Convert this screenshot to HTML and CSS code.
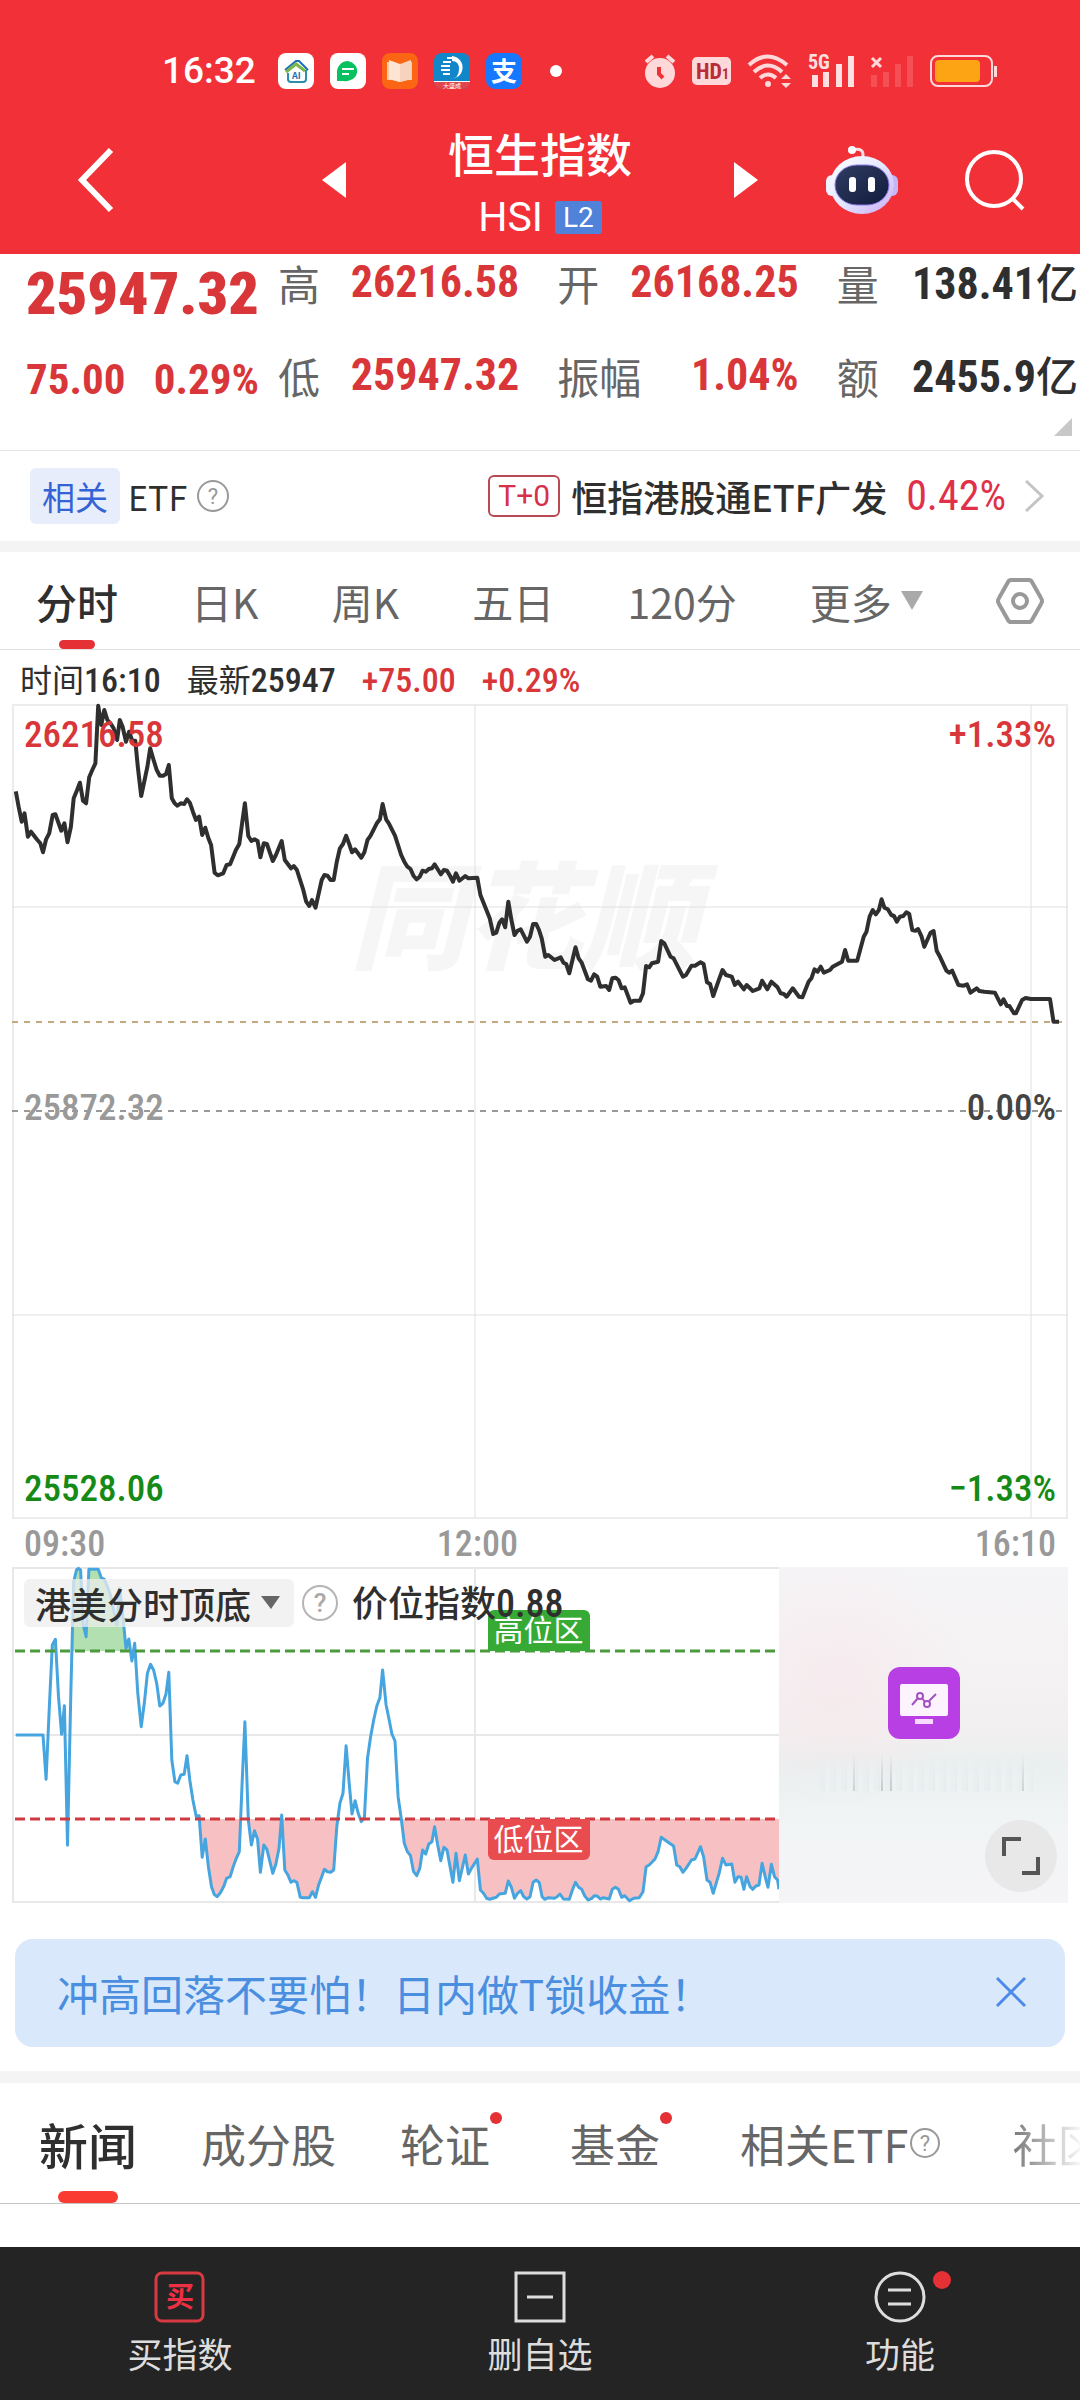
FILE: index.html
```html
<!DOCTYPE html>
<html lang="zh-CN">
<head>
    <meta charset="UTF-8">
    <meta name="viewport" content="width=device-width, initial-scale=1.0">
    <title>恒生指数 HSI</title>
    <link rel="stylesheet" href="styles.css">
</head>
<body>
    <header class="header">
        <div class="status-bar">
            <span class="clock">16:32</span>
            <div class="app-icons">
                <svg width="36" height="36" viewBox="0 0 36 36">
                    <rect width="36" height="36" rx="8" fill="#fff"/>
                    <path d="M7 17 18 8l3 0 9 9" fill="none" stroke="#1d6fb5" stroke-width="2"/>
                    <path d="M8 19 18 11l9 7" fill="none" stroke="#7ab648" stroke-width="3"/>
                    <path d="M10 20v6q0 3 3 3h12q3 0 3-3v-9" fill="none" stroke="#2a8fa8" stroke-width="2"/>
                    <text x="14" y="26" font-size="9" font-weight="700" fill="#1d6fb5">AI</text>
                </svg>
                <svg width="36" height="36" viewBox="0 0 36 36">
                    <rect width="36" height="36" rx="8" fill="#fff"/>
                    <path d="M18 8a11 10 0 1 1-4 20H7v-9A11 11 0 0 1 18 8z" fill="#0ac160"/>
                    <path d="M12 16h12M12 21h7" stroke="#fff" stroke-width="2"/>
                </svg>
                <svg width="36" height="36" viewBox="0 0 36 36">
                    <rect width="36" height="36" rx="8" fill="#fb6514"/>
                    <path d="M5 9h4l9 3 9-3h3v18h-4l-8 2-8-2H5z" fill="#fbc9a8"/>
                    <path d="M7 7l11 4v18L7 26z" fill="#fde4d3"/>
                    <path d="M29 7l-11 4v18l11-3z" fill="#f6d3bf"/>
                </svg>
                <svg width="36" height="36" viewBox="0 0 36 36">
                    <rect width="36" height="36" rx="8" fill="#1187c9"/>
                    <path d="M0 29h36a8 7 0 0 1-8 7H8a8 7 0 0 1-8-7z" fill="#e0444c"/>
                    <path d="M0 28h36v1H0z" fill="#fff"/>
                    <path d="M18 3a11 11 0 1 1-2 23q9 0 9-10 0-8-7-8z" fill="#fff"/>
                    <path d="M18 5H13M17 9h-8M16 13H7M16 17H7M16 21H9" stroke="#fff" stroke-width="2"/>
                    <text x="9" y="35" font-size="6" fill="#fff">大盛成</text>
                </svg>
                <svg width="36" height="36" viewBox="0 0 36 36">
                    <rect width="36" height="36" rx="9" fill="#1677ff"/>
                    <text x="5" y="28" font-size="26" font-weight="700" fill="#fff">支</text>
                </svg>
            </div>
            <span class="status-dot"></span>
            <div class="system-icons">
                <svg width="32" height="34" viewBox="0 0 32 34" fill="#ffd9da">
                    <circle cx="16" cy="19" r="15"/>
                    <path d="M2 8 9 2M30 8l-7-6" stroke="#ffd9da" stroke-width="4"/>
                    <path d="M15 13v7l4 4" stroke="#f13038" stroke-width="4" fill="none"/>
                </svg>
                <svg width="39" height="28" viewBox="0 0 39 28">
                    <rect width="39" height="28" rx="5" fill="#ffd9da"/>
                    <text x="4" y="22" font-size="22" font-weight="700" font-family="Roboto Condensed, Roboto" fill="#b92c38">HD</text>
                    <text x="30" y="22" font-size="14" font-weight="700" font-family="Roboto Condensed, Roboto" fill="#b92c38">1</text>
                </svg>
                <svg width="45" height="34" viewBox="0 0 45 34" fill="none" stroke="#ffd9da" stroke-width="4">
                    <path d="M2 11q18-17 38 0M7 18q14-13 28 0M13 24q8-7 16 0"/>
                    <circle cx="21" cy="30" r="3" fill="#ffd9da" stroke="none"/>
                    <path d="M34 25l5-5 5 5zM34 29h10l-5 5z" fill="#ffd9da" stroke="none"/>
                </svg>
                <svg width="47" height="34" viewBox="0 0 47 34" fill="#ffe0e0">
                    <rect x="4" y="21" width="6" height="12"/>
                    <rect x="15" y="18" width="6" height="15"/>
                    <rect x="28" y="10" width="6" height="23"/>
                    <rect x="40" y="2" width="6" height="31"/>
                    <text x="0" y="15" font-size="20" font-weight="700" font-family="Roboto Condensed, Roboto">5G</text>
                </svg>
                <svg width="43" height="34" viewBox="0 0 43 34" fill="#f8646a">
                    <rect x="0" y="21" width="6" height="12" opacity=".6"/>
                    <rect x="12" y="18" width="6" height="15" opacity=".6"/>
                    <rect x="24" y="10" width="6" height="23" opacity=".6"/>
                    <rect x="36" y="2" width="6" height="31" opacity=".6"/>
                    <path d="M1 4l9 9M10 4l-9 9" stroke="#ffd9da" stroke-width="3"/>
                </svg>
                <svg width="68" height="32" viewBox="0 0 68 32">
                    <rect x="1" y="1" width="61" height="30" rx="7" fill="none" stroke="#ffd9da" stroke-width="2"/>
                    <rect x="5" y="5" width="45" height="22" rx="4" fill="#fda414"/>
                    <rect x="64" y="11" width="3" height="11" fill="#ffd9da"/>
                </svg>
            </div>
        </div>
        <nav class="title-bar">
            <div class="title-left">
                <button class="icon-btn" aria-label="返回">
                    <svg width="36" height="64" viewBox="0 0 36 64" fill="none" stroke="#fff" stroke-width="6"><path d="M34 2 5 32l29 30"/></svg>
                </button>
                <button class="icon-btn" aria-label="上一个">
                    <svg width="24" height="36" viewBox="0 0 24 36"><path d="M24 0v36L0 18z" fill="#fff"/></svg>
                </button>
            </div>
            <div class="title">
                <h1>恒生指数</h1>
                <p><span>HSI</span><span class="level">L2</span></p>
            </div>
            <div class="title-right">
                <button class="icon-btn" aria-label="下一个">
                    <svg width="24" height="36" viewBox="0 0 24 36"><path d="M0 0v36l24-18z" fill="#fff"/></svg>
                </button>
                <button class="icon-btn" aria-label="智能助手">
                    <svg width="72" height="70" viewBox="0 0 72 70">
                        <defs>
                            <linearGradient id="shell" x1="0" y1="0" x2="1" y2="1">
                                <stop offset="0" stop-color="#fff"/>
                                <stop offset=".5" stop-color="#e3e8ff"/>
                                <stop offset="1" stop-color="#c9a9f5"/>
                            </linearGradient>
                            <linearGradient id="visor" x1="0" y1="0" x2="1" y2="1">
                                <stop offset="0" stop-color="#303c62"/>
                                <stop offset="1" stop-color="#111b3c"/>
                            </linearGradient>
                        </defs>
                        <path d="M27 5q11-3 10 7" fill="none" stroke="#fbdfe4" stroke-width="3"/>
                        <circle cx="26" cy="5" r="4" fill="#fff"/>
                        <rect x="0" y="30" width="12" height="21" rx="6" fill="#f0f1ff"/>
                        <rect x="60" y="30" width="12" height="21" rx="6" fill="#c3b8f5"/>
                        <ellipse cx="36" cy="40" rx="32" ry="29" fill="url(#shell)"/>
                        <rect x="9" y="20" width="54" height="40" rx="22" fill="url(#visor)" stroke="#8c7be8" stroke-width="1"/>
                        <rect x="23" y="32" width="7" height="15" rx="3" fill="#fff"/>
                        <rect x="42" y="32" width="7" height="15" rx="3" fill="#fff"/>
                    </svg>
                </button>
                <button class="icon-btn" aria-label="搜索">
                    <svg width="60" height="62" viewBox="0 0 60 62" fill="none" stroke="#fff" stroke-width="4"><circle cx="29" cy="30" r="27"/><path d="M47 49l11 11"/></svg>
                </button>
            </div>
        </nav>
    </header>

    <main>
        <section class="quote">
            <div class="quote-main">
                <strong class="last">25947.32</strong>
                <div class="change"><span>75.00</span><span>0.29%</span></div>
            </div>
            <dl class="quote-grid">
                <div><dt>高</dt><dd class="up">26216.58</dd></div>
                <div><dt>开</dt><dd class="up">26168.25</dd></div>
                <div><dt>量</dt><dd>138.41<span class="unit">亿</span></dd></div>
                <div><dt>低</dt><dd class="up">25947.32</dd></div>
                <div><dt>振幅</dt><dd class="up">1.04%</dd></div>
                <div><dt>额</dt><dd>2455.9<span class="unit">亿</span></dd></div>
            </dl>
            <span class="corner"></span>
        </section>

        <a class="etf-row" href="#etf">
            <span class="etf-tag">相关</span>
            <span class="etf-label">ETF</span>
            <svg width="32" height="32" viewBox="0 0 32 32"><circle cx="16" cy="16" r="15" fill="none" stroke="#999" stroke-width="2"/><text x="16" y="24" text-anchor="middle" font-size="22" font-family="Roboto" fill="#999">?</text></svg>
            <span class="t0">T+0</span>
            <span class="etf-name">恒指港股通ETF广发</span>
            <span class="etf-change">0.42%</span>
            <svg width="19" height="32" viewBox="0 0 19 32" fill="none" stroke="#c4c4c4" stroke-width="3"><path d="M1 1l16 15L1 31"/></svg>
        </a>

        <nav class="period-tabs">
            <button class="active">分时</button>
            <button>日K</button>
            <button>周K</button>
            <button>五日</button>
            <button>120分</button>
            <button>更多<svg width="22" height="19" viewBox="0 0 22 19"><path d="M0 0h22L11 19z" fill="#aaa"/></svg></button>
            <button aria-label="设置"><svg width="48" height="46" viewBox="0 0 48 46" fill="none" stroke="#999" stroke-width="4"><path d="M15 2h18q2 0 3 2l9 16q2 3 0 6l-9 16q-1 2-3 2H15q-2 0-3-2L3 26q-2-3 0-6l9-16q1-2 3-2z"/><circle cx="24" cy="23" r="7"/></svg></button>
        </nav>

        <p class="tick-info">
            <span>时间<b>16:10</b></span>
            <span>最新<b>25947</b></span>
            <span class="up"><b>+75.00</b></span>
            <span class="up"><b>+0.29%</b></span>
        </p>

        <section class="chart">
            <span class="watermark">同花顺</span>
            <svg class="plot" viewBox="0 0 1056 815">
                <g stroke="#e0e0e0" stroke-width="1" fill="none">
                    <rect x="1" y="1" width="1054" height="813" stroke="#ececec" stroke-width="2"/>
                    <path d="M463 1v813M1019 1v813M0 203h1056M0 611h1056"/>
                </g>
                <path d="M0 318h1050" stroke="#c3a97c" stroke-width="2" stroke-dasharray="6 6"/>
                <path d="M0 407h1050" stroke="#999" stroke-width="2" stroke-dasharray="6 6"/>
                <path id="priceLine" fill="none" stroke="#2f2f2f" stroke-width="4" stroke-linejoin="round"/>
            </svg>
            <span class="label top-left up">26216.58</span>
            <span class="label top-right up">+1.33%</span>
            <span class="label mid-left">25872.32</span>
            <span class="label mid-right">0.00%</span>
            <span class="label bottom-left down">25528.06</span>
            <span class="label bottom-right down">−1.33%</span>
        </section>
        <div class="time-axis"><span>09:30</span><span>12:00</span><span>16:10</span></div>

        <section class="indicator">
            <div class="indicator-plot">
                <svg class="plot" viewBox="0 0 767 336">
                    <defs>
                        <clipPath id="above"><rect x="0" y="0" width="767" height="84"/></clipPath>
                        <clipPath id="below"><rect x="0" y="252" width="767" height="84"/></clipPath>
                    </defs>
                    <path d="M0 1h767M1 1v334M0 335h767M0 168h767M463 1v334" stroke="#e8e8e8" stroke-width="2" fill="none"/>
                    <g clip-path="url(#above)"><path id="highArea" fill="#b3e0b0"/></g>
                    <g clip-path="url(#below)"><path id="lowArea" fill="#f7c1c3"/></g>
                    <path id="indexLine" fill="none" stroke="#46a5df" stroke-width="3" stroke-linejoin="round"/>
                    <path d="M3 84h764" stroke="#4b9a3c" stroke-width="3" stroke-dasharray="10 5"/>
                    <path d="M3 252h764" stroke="#cf3a41" stroke-width="3" stroke-dasharray="10 5"/>
                </svg>
                <span class="zone high">高位区</span>
                <span class="zone low">低位区</span>
                <div class="indicator-bar">
                    <label class="picker">
                        <select aria-label="指标"><option>港美分时顶底</option></select>
                        <svg width="19" height="13" viewBox="0 0 19 13"><path d="M0 0h19l-9 13z" fill="#666"/></svg>
                    </label>
                    <svg width="36" height="36" viewBox="0 0 36 36"><circle cx="18" cy="18" r="17" fill="none" stroke="#b5b5b5" stroke-width="2"/><text x="18" y="27" text-anchor="middle" font-size="26" font-family="Roboto" fill="#aaa">?</text></svg>
                    <span>价位指数<b>0.88</b></span>
                </div>
            </div>
            <div class="locked">
                <span class="barcode"></span>
                <svg width="72" height="72" viewBox="0 0 72 72">
                    <rect width="72" height="72" rx="12" fill="#b83fe4"/>
                    <rect x="12" y="17" width="48" height="32" rx="2" fill="#fcf3ff"/>
                    <rect x="27" y="52" width="18" height="5" fill="#f9d9ff"/>
                    <g fill="none" stroke="#a350c0" stroke-width="2"><path d="M24 38l6-7M34 31l3 4M41 34l7-7"/><circle cx="32" cy="29" r="3"/><circle cx="39" cy="37" r="3"/></g>
                </svg>
                <button class="expand" aria-label="展开">
                    <svg width="38" height="38" viewBox="0 0 38 38" fill="none" stroke="#555" stroke-width="4"><path d="M2 19V2h17M36 20v16H20"/></svg>
                </button>
            </div>
        </section>

        <div class="banner">
            <span>冲高回落不要怕！日内做T锁收益！</span>
            <button class="icon-btn" aria-label="关闭">
                <svg width="30" height="30" viewBox="0 0 30 30" stroke="#4a8bea" stroke-width="3"><path d="M1 1l28 28M29 1 1 29"/></svg>
            </button>
        </div>

        <nav class="news-tabs">
            <button class="active">新闻</button>
            <button>成分股</button>
            <button class="dot">轮证</button>
            <button class="dot">基金</button>
            <button>相关ETF<svg width="31" height="31" viewBox="0 0 31 31"><circle cx="15" cy="15" r="14" fill="none" stroke="#999" stroke-width="2"/><text x="15" y="23" text-anchor="middle" font-size="22" font-family="Roboto" fill="#999">?</text></svg></button>
            <button class="fade">社区</button>
        </nav>
    </main>

    <nav class="bottom-nav">
        <a href="#buy">
            <svg width="50" height="50" viewBox="0 0 50 50"><rect x="1" y="1" width="47" height="48" rx="6" fill="none" stroke="#d83a42" stroke-width="3"/><text x="25" y="35" text-anchor="middle" font-size="28" font-weight="700" fill="#ee3044">买</text></svg>
            <span>买指数</span>
        </a>
        <a href="#remove">
            <svg width="50" height="50" viewBox="0 0 50 50" fill="none" stroke="#ddd" stroke-width="3"><rect x="1" y="1" width="48" height="48"/><path d="M12 25h26"/></svg>
            <span>删自选</span>
        </a>
        <a href="#more">
            <svg width="52" height="50" viewBox="0 0 52 50" fill="none" stroke="#ddd" stroke-width="3"><circle cx="26" cy="25" r="24"/><path d="M14 18h23M14 32h23"/></svg>
            <span>功能</span>
            <i class="badge"></i>
        </a>
    </nav>
    <script src="chart.js"></script>
</body>
</html>
```

FILE: styles.css
```css
* {
    box-sizing: border-box;
}
body {
    margin: 0;
    background: #fff;
    color: #2f2f2f;
    font-family: "Noto Sans CJK SC", sans-serif;
    min-height: 100vh;
    display: flex;
    flex-direction: column;
}
main {
    flex: 1;
}
h1, p, dl, dd {
    margin: 0;
}
button {
    border: none;
    background: none;
    padding: 0;
    color: inherit;
    font: inherit;
    cursor: pointer;
}
a {
    color: inherit;
    text-decoration: none;
}
svg {
    display: block;
    flex-shrink: 0;
    overflow: visible;
}
.up {
    color: #d9363a;
}
.down {
    color: #168a16;
}

/* header */
.header {
    background: #f13038;
    color: #fff;
}
.status-bar {
    display: flex;
    align-items: center;
    height: 106px;
    padding: 36px 82px 0 162px;
}
.clock {
    font: 500 37px/70px Roboto, sans-serif;
}
.app-icons {
    display: flex;
    gap: 16px;
    margin-left: 22px;
}
.status-dot {
    width: 12px;
    height: 12px;
    margin-left: 28px;
    border-radius: 50%;
    background: #fff;
}
.system-icons {
    display: flex;
    align-items: center;
    gap: 16px;
    margin-left: auto;
}
.title-bar {
    display: grid;
    grid-template-columns: 1fr auto 1fr;
    align-items: center;
    height: 148px;
}
.title-left, .title-right {
    display: flex;
    align-items: center;
    justify-content: space-between;
}
.title-left {
    padding: 0 102px 0 77px;
}
.title-right {
    padding: 0 55px 0 102px;
}
.title {
    padding-top: 10px;
}
.title h1 {
    font-size: 46px;
    line-height: 64px;
    font-weight: 500;
}
.title p {
    display: flex;
    align-items: center;
    justify-content: center;
    gap: 12px;
    font: 41px/66px Roboto, sans-serif;
}
.level {
    padding: 0 8px;
    border-radius: 3px;
    background: #4f82d8;
    font-size: 28px;
    line-height: 33px;
}

/* quote */
.quote {
    position: relative;
    display: flex;
    gap: 19px;
    height: 197px;
    padding: 0 2px 0 26px;
    border-bottom: 1px solid #e4e4e4;
}
.quote-main {
    color: #d9363a;
    padding-top: 8px;
    font-family: "Roboto Condensed", Roboto, sans-serif;
    font-weight: 700;
}
.last {
    display: block;
    font-size: 60px;
    line-height: 64px;
}
.change {
    display: flex;
    justify-content: space-between;
    margin-top: 25px;
    font-size: 43px;
    line-height: 56px;
}
.quote-grid {
    flex: 1;
    display: grid;
    grid-template-columns: repeat(3, 1fr);
    column-gap: 38px;
    row-gap: 37px;
    align-content: start;
}
.quote-grid div {
    display: flex;
    justify-content: space-between;
    align-items: center;
    height: 56px;
    white-space: nowrap;
}
.quote-grid dt {
    color: #666;
    font-size: 42px;
}
.quote-grid dd {
    font: 700 44px/56px "Roboto Condensed", Roboto, sans-serif;
}
.unit {
    font: 500 42px/56px "Noto Sans CJK SC", sans-serif;
}
.corner {
    position: absolute;
    right: 8px;
    bottom: 14px;
    border-left: 18px solid transparent;
    border-bottom: 18px solid #c8c8c8;
}

/* related etf */
.etf-row {
    display: flex;
    align-items: center;
    height: 90px;
    padding: 0 36px 0 30px;
}
.etf-tag {
    padding: 0 12px;
    border-radius: 6px;
    background: #e8edfb;
    color: #3463d5;
    font-size: 33px;
    line-height: 56px;
}
.etf-label {
    margin: 0 10px 0 8px;
    font-size: 34px;
}
.t0 {
    margin-left: auto;
    padding: 0 8px;
    border: 2px solid #b94a54;
    border-radius: 6px;
    color: #d8304a;
    font: 30px/38px Roboto, sans-serif;
}
.etf-name {
    margin: 0 19px 0 11px;
    font-size: 36px;
    font-weight: 500;
}
.etf-change {
    margin-right: 19px;
    color: #e0304a;
    font: 42px/56px "Roboto Condensed", Roboto, sans-serif;
}

/* period tabs */
.period-tabs {
    display: flex;
    justify-content: space-between;
    align-items: stretch;
    height: 109px;
    padding: 0 36px;
    border-top: 11px solid #f4f4f4;
    border-bottom: 1px solid #e0e0e0;
    color: #666;
    font-size: 41px;
}
.period-tabs button {
    position: relative;
    display: flex;
    align-items: center;
    gap: 9px;
}
.period-tabs .active {
    color: #2f2f2f;
    font-weight: 500;
}
.period-tabs .active::after,
.news-tabs .active::after {
    content: "";
    position: absolute;
    left: 50%;
    bottom: 0;
    width: 36px;
    height: 9px;
    margin-left: -18px;
    border-radius: 6px;
    background: #e53035;
}
.tick-info {
    display: flex;
    gap: 26px;
    height: 54px;
    padding-left: 20px;
    font-size: 32px;
    line-height: 56px;
}
.tick-info b, .indicator-bar b {
    font-family: "Roboto Condensed", Roboto, sans-serif;
    font-size: 34px;
    font-weight: 500;
}

/* intraday chart */
.chart {
    position: relative;
    margin: 0 12px;
}
.plot {
    position: relative;
    width: 100%;
    height: auto;
}
.watermark {
    position: absolute;
    top: 18%;
    left: 32%;
    color: #f6f6f6;
    font-size: 116px;
    line-height: 116px;
    font-weight: 900;
    font-style: italic;
}
.label {
    position: absolute;
    font: 500 37px/40px "Roboto Condensed", Roboto, sans-serif;
}
.top-left, .mid-left, .bottom-left {
    left: 12px;
}
.top-right, .mid-right, .bottom-right {
    right: 12px;
}
.top-left, .top-right {
    top: 11px;
}
.mid-left, .mid-right {
    top: calc(50% - 24px);
}
.mid-left {
    color: #999;
}
.mid-right {
    color: #444;
}
.bottom-left, .bottom-right {
    bottom: 10px;
}
.time-axis {
    display: grid;
    grid-template-columns: 40% auto 1fr;
    height: 48px;
    padding: 0 24px;
    color: #999;
    font: 500 36px/50px "Roboto Condensed", Roboto, sans-serif;
}
.time-axis span:last-child {
    text-align: right;
}

/* top/bottom indicator */
.indicator {
    display: grid;
    grid-template-columns: 767fr 289fr;
    margin: 0 12px;
}
.indicator-plot {
    position: relative;
}
.indicator-bar {
    position: absolute;
    top: 10px;
    left: 12px;
    display: flex;
    align-items: center;
    font-size: 36px;
    font-weight: 500;
}
.indicator-bar span {
    margin-left: 14px;
    line-height: 48px;
}
.indicator-bar b {
    font-size: 38px;
}
.picker {
    display: flex;
    align-items: center;
    gap: 9px;
    height: 48px;
    margin-right: 8px;
    padding: 0 14px 0 11px;
    border-radius: 6px;
    background: rgba(238, 238, 238, .75);
}
.picker select {
    appearance: none;
    border: none;
    padding: 0;
    background: none;
    color: inherit;
    font: inherit;
    line-height: 48px;
}
.zone {
    position: absolute;
    left: 62%;
    width: 102px;
    color: #fff;
    font-size: 30px;
    line-height: 36px;
    padding-bottom: 5px;
    text-align: center;
}
.high {
    bottom: 75%;
    border-radius: 6px 6px 0 0;
    background: #36aa34;
}
.low {
    top: 75%;
    border-radius: 0 0 6px 6px;
    background: #e94c4e;
}
.locked {
    position: relative;
    display: flex;
    flex-direction: column;
    align-items: center;
    padding-top: 100px;
    background:
        radial-gradient(ellipse at 20% 34%, rgba(248, 232, 236, .7), transparent 40%),
        linear-gradient(#f5f4f6, #f4f2f3 30%, #f1efef 50%, #eaeff0 60%, #f1f4f5 75%, #f5f4f7);
}
.barcode {
    position: absolute;
    top: 186px;
    left: 14%;
    right: 12%;
    height: 38px;
    background:
        linear-gradient(90deg, transparent 16%, #ccd2d3 16%, #ccd2d3 17%, transparent 17%, transparent 29%, #c6cacb 29%, #c6cacb 30%, transparent 30%, transparent 33%, #c6cacb 33%, #c6cacb 34%, transparent 34%, transparent 95%, #cdd3d4 95%, #cdd3d4 96%, transparent 96%),
        repeating-linear-gradient(90deg, #e9eeef 0 4px, #e5ebec 4px 6px, #ecf1f2 6px 11px);
    -webkit-mask-image: linear-gradient(transparent, #000);
    mask-image: linear-gradient(transparent, #000);
}
.expand {
    position: absolute;
    right: 11px;
    bottom: 11px;
    display: flex;
    align-items: center;
    justify-content: center;
    width: 72px;
    height: 72px;
    border-radius: 50%;
    background: #e8e8e8;
}

/* banner */
.banner {
    display: flex;
    align-items: center;
    justify-content: space-between;
    height: 108px;
    margin: 36px 15px 24px;
    padding: 0 39px 2px 42px;
    border-radius: 18px;
    background: #d9e8fb;
    color: #4a8ee0;
    font-size: 42px;
}

/* news tabs */
.news-tabs {
    display: flex;
    gap: 64px;
    height: 133px;
    padding: 0 0 0 39px;
    border-top: 12px solid #f4f4f4;
    border-bottom: 1px solid #c4c4c4;
    color: #666;
    font-size: 45px;
    white-space: nowrap;
    overflow: hidden;
}
.news-tabs button {
    position: relative;
    display: flex;
    align-items: center;
    flex-shrink: 0;
}
.news-tabs .active {
    color: #2f2f2f;
    font-size: 49px;
    font-weight: 500;
}
.news-tabs .active::after {
    width: 60px;
    height: 12px;
    margin-left: -30px;
    background: #f93b32;
}
.news-tabs .dot {
    margin-right: 16px;
}
.news-tabs svg {
    margin: 0 7px 0 2px;
}
.dot::before, .badge {
    content: "";
    position: absolute;
    top: 29px;
    right: -12px;
    width: 12px;
    height: 12px;
    border-radius: 50%;
    background: #e53035;
}
.news-tabs .fade {
    background: linear-gradient(90deg, #777, #fff 80%);
    -webkit-background-clip: text;
    background-clip: text;
    color: transparent;
}

/* bottom nav */
.bottom-nav {
    display: grid;
    grid-template-columns: repeat(3, 1fr);
    height: 153px;
    background: #242424;
    color: #ddd;
    font-size: 35px;
    line-height: 52px;
}
.bottom-nav a {
    position: relative;
    display: flex;
    flex-direction: column;
    align-items: center;
    gap: 5px;
    padding-top: 25px;
}
.badge {
    top: 24px;
    left: calc(50% + 33px);
    width: 18px;
    height: 18px;
}
```

FILE: chart.js
```js
// x,y samples of the trading day, left and right half of the screen
const priceLeft = '46,724 54,770 63,815 71,790 81,860 90,845 107,868 117,880 125,907 134,868 143,850 153,795 161,793 178,842 187,820 196,877 206,830 214,745 224,720 232,698 241,752 250,760 259,682 268,660 277,640 285,467 294,525 303,480 312,510 321,520 330,535 340,570 348,510 356,530 366,575 375,545 384,572 393,572 400,650 410,738 420,690 428,650 436,595 446,630 455,660 464,677 474,677 482,672 490,645 499,745 507,760 515,767 525,760 535,762 543,748 551,758 560,785 569,810 578,800 587,855 596,833 605,865 613,885 623,968 632,976 648,970 658,945 668,943 685,900 695,882 703,820 711,760 721,858 730,873 739,868 748,873 756,922 766,880 775,882 792,933 801,915 818,873 827,930 845,955 853,948 862,960 880,1018 889,1055 898,1068 906,1050 916,1073 934,990 942,975 951,977 960,990 969,990 978,935 987,895 996,882 1005,857 1014,882 1022,907 1031,898 1049,923 1058,907 1067,870 1076,857 1094,820 1103,808 1111,762 1121,808 1129,820 1147,857 1165,915 1174,935 1183,950 1192,957 1201,978 1210,988 1219,980 1227,962 1236,965 1245,957 1254,955 1262,943 1271,958 1280,973 1289,960 1298,962 1307,978 1315,995 1324,970 1334,992 1351,978 1360,985 1386,983 1395,1035 1422,1105 1432,1152 1441,1148 1450,1118 1458,1108 1467,1132 1476,1055 1485,1110 1494,1155 1503,1142 1512,1138 1530,1175 1539,1160 1548,1122 1557,1122 1565,1140';
const priceRight = '5,1165 15,1220 24,1215 42,1230 60,1222 68,1238 76,1242 85,1270 103,1192 112,1225 121,1238 139,1288 148,1292 157,1273 166,1280 175,1310 192,1308 201,1320 210,1285 219,1283 228,1290 237,1315 246,1312 263,1358 272,1352 290,1352 299,1330 308,1248 317,1252 325,1240 343,1235 352,1173 361,1180 379,1220 388,1225 415,1280 424,1275 440,1247 450,1247 466,1237 475,1242 485,1297 494,1302 503,1338 521,1285 530,1260 540,1275 557,1280 566,1305 575,1295 592,1318 600,1305 618,1323 637,1315 645,1292 660,1318 672,1295 690,1312 699,1330 708,1332 716,1340 734,1315 752,1340 762,1342 780,1295 788,1285 797,1258 806,1265 815,1250 824,1268 842,1260 850,1250 877,1235 886,1200 895,1232 921,1232 940,1160 948,1145 957,1100 966,1080 975,1093 984,1080 992,1048 1000,1073 1010,1078 1020,1095 1028,1098 1036,1115 1045,1100 1055,1098 1064,1087 1072,1092 1081,1140 1090,1142 1098,1137 1108,1160 1116,1190 1134,1148 1143,1143 1152,1202 1162,1222 1180,1262 1188,1268 1197,1262 1215,1305 1230,1307 1240,1303 1250,1328 1268,1315 1276,1323 1290,1325 1321,1328 1338,1363 1346,1348 1356,1368 1363,1368 1376,1390 1382,1390 1400,1350 1410,1344 1425,1347 1481,1347 1491,1415 1507,1415';
const indexLeft = '46,555 125,555 134,688 143,480 152,285 161,268 170,440 179,553 187,467 196,886 206,420 214,95 222,60 228,55 234,60 241,220 250,260 258,58 285,58 294,83 303,88 312,110 321,135 330,180 339,225 348,115 357,200 366,295 374,267 383,333 391,280 400,430 410,530 419,460 428,370 437,343 446,360 455,400 464,468 473,460 482,432 490,367 499,630 508,695 516,700 525,675 535,673 543,617 551,690 560,750 570,800 578,797 587,922 596,867 605,950 614,1010 622,1033 630,1040 640,1028 650,1008 658,985 668,980 677,950 686,925 695,905 703,700 711,515 721,810 730,885 739,842 748,868 756,967 766,885 775,898 792,970 801,942 810,895 818,795 827,960 836,975 845,997 853,992 862,997 872,1042 880,1043 898,1043 907,1025 916,1042 925,1005 934,980 942,958 951,965 960,967 969,960 978,830 987,760 996,730 1005,587 1014,700 1022,792 1031,752 1040,790 1049,815 1058,803 1067,625 1076,560 1085,510 1094,468 1103,443 1111,360 1121,465 1130,510 1138,552 1147,573 1156,740 1165,805 1174,880 1183,905 1192,917 1201,965 1210,977 1219,955 1227,900 1236,912 1245,882 1254,875 1262,830 1271,885 1280,932 1289,892 1298,900 1315,997 1324,910 1334,992 1351,915 1360,972 1369,955 1386,927 1395,1020 1404,1030 1413,1045 1422,1048 1441,1042 1450,1032 1467,1030 1476,993 1485,1012 1494,1045 1503,1030 1512,1022 1521,1040 1530,1047 1539,1040 1548,997 1557,990 1566,998';
const indexRight = '6,1040 14,1048 24,1043 42,1045 50,1040 58,1032 68,1047 85,1048 94,1020 103,997 112,1012 121,1018 130,1038 140,1050 150,1045 158,1037 166,1038 175,1047 184,1043 201,1047 210,1018 219,1012 228,1018 237,1042 246,1037 260,1052 272,1045 288,1043 299,1025 308,950 317,945 334,927 343,905 352,862 370,875 388,888 397,945 406,950 415,967 424,955 440,930 450,927 466,890 475,920 485,990 494,997 503,1030 521,967 530,925 540,945 557,942 566,997 575,980 584,982 592,1018 600,980 610,1010 618,1018 627,1008 636,1005 645,940 655,985 662,1012 672,943 681,980 690,990 694,1018';

function toPoints(left, right, top) {
    const parse = (text, shift) => text.split(' ').map(pair => {
        const [x, y] = pair.split(',').map(Number);
        return [((x + shift) / 2.9037 - 12).toFixed(1), ((y - top) / 3).toFixed(1)];
    });
    return parse(left, 0).concat(parse(right, 1568));
}

function linePath(points) {
    return 'M' + points.map(p => p.join(' ')).join('L');
}

// closes the line along a threshold, the clip path keeps only one side
function areaPath(points, level) {
    const last = points[points.length - 1][0];
    return `${linePath(points)}L${last} ${level}L${points[0][0]} ${level}Z`;
}

const price = toPoints(priceLeft, priceRight, 462);
document.getElementById('priceLine').setAttribute('d', linePath(price));

const index = toPoints(indexLeft, indexRight, 51);
document.getElementById('indexLine').setAttribute('d', linePath(index));
document.getElementById('highArea').setAttribute('d', areaPath(index, 84));
document.getElementById('lowArea').setAttribute('d', areaPath(index, 252));
```
